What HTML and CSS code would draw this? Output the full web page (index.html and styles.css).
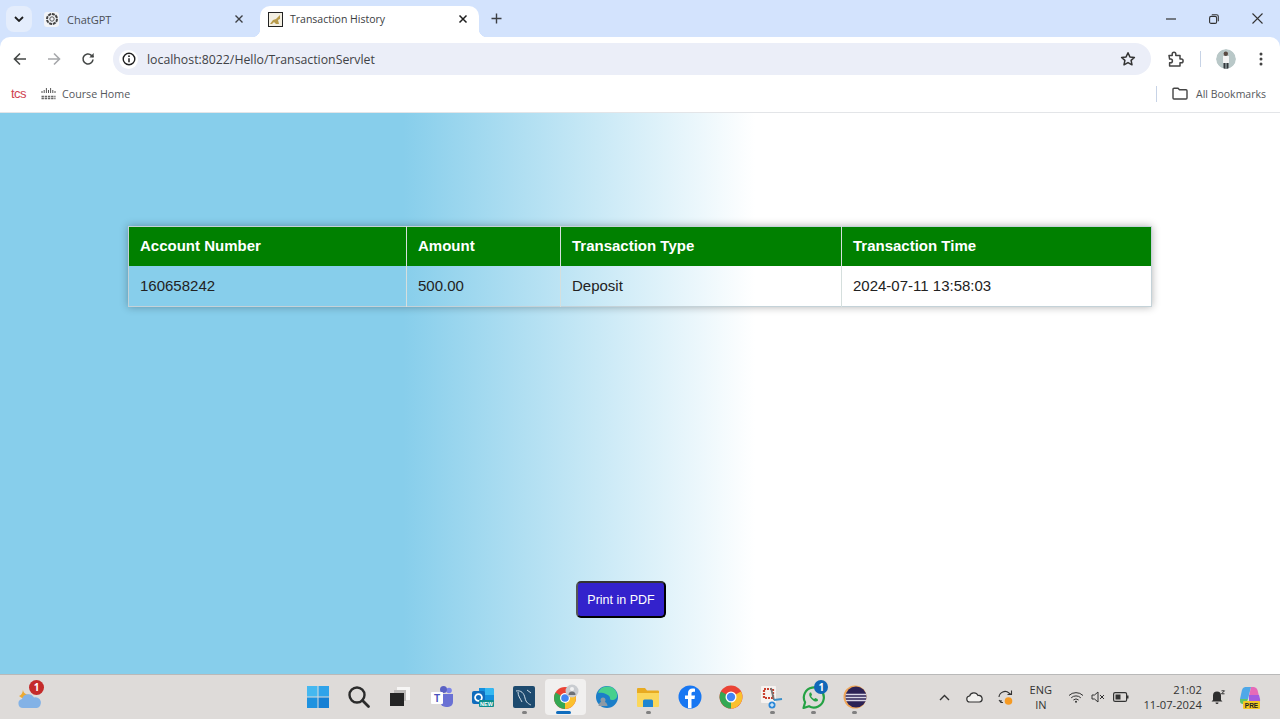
FILE: index.html
```html
<!DOCTYPE html>
<html lang="en">
  <head>
    <meta charset="UTF-8" />
    <title>Transaction History</title>
    <link rel="stylesheet" href="styles.css">
  </head>
  <body>
    <div class="tabstrip">
      <div class="tabsearch">
        <svg width="10" height="6" viewBox="0 0 10 6"><path d="M1 1l4 4 4-4" fill="none" stroke="#1f1f1f" stroke-width="1.800"/></svg>
      </div>
      <div class="tab">
        <span class="favicon white">
          <svg width="14" height="14" viewBox="0 0 14 14"><circle cx="7" cy="7" r="5" fill="none" stroke="#444" stroke-width="2" stroke-dasharray="3 .8"/><circle cx="7" cy="7" r="2.200" fill="none" stroke="#555"/></svg>
        </span>
        <span class="tabtitle">ChatGPT</span>
        <svg class="tabclose" width="10" height="10" viewBox="0 0 10 10"><path d="M1.500 1.500l7 7M8.500 1.500l-7 7" stroke="#3c3f44" stroke-width="1.400"/></svg>
      </div>
      <div class="tab active">
        <span class="favicon">
          <svg width="15" height="15" viewBox="0 0 15 15"><rect x=".5" y=".5" width="14" height="14" fill="#f3efe2" stroke="#222"/><path d="M2 12l3-4 3-1 4-4v4l-2 1 1 4H8L6 10l-2 2z" fill="#b79a4a"/></svg>
        </span>
        <span class="tabtitle">Transaction History</span>
        <svg class="tabclose" width="10" height="10" viewBox="0 0 10 10"><path d="M1.500 1.500l7 7M8.500 1.500l-7 7" stroke="#1f1f1f" stroke-width="1.500"/></svg>
      </div>
      <svg class="newtab" width="11" height="11" viewBox="0 0 11 11"><path d="M5.500 .5v10M.5 5.500h10" stroke="#3c3f44" stroke-width="1.400"/></svg>
      <div class="winbtns">
        <svg width="10" height="10" viewBox="0 0 10 10"><path d="M0 5h10" stroke="#333" stroke-width="1.200"/></svg>
        <svg width="10" height="10" viewBox="0 0 10 10"><rect x=".6" y="2.400" width="7" height="7" rx="1.500" fill="none" stroke="#333" stroke-width="1.100"/><path d="M2.800 .7h4.700a1.800 1.800 0 0 1 1.800 1.800v4.700" fill="none" stroke="#333" stroke-width="1.100"/></svg>
        <svg width="11" height="11" viewBox="0 0 11 11"><path d="M.5 .5l10 10M10.500 .5l-10 10" stroke="#333" stroke-width="1.100"/></svg>
      </div>
    </div>

    <div class="toolbar">
      <div class="navbtns">
        <svg width="14" height="14" viewBox="0 0 14 14"><path d="M13 7H2M7 1.500L1.500 7 7 12.500" fill="none" stroke="#444746" stroke-width="1.600"/></svg>
        <svg width="14" height="14" viewBox="0 0 14 14"><path d="M1 7h11M7 1.500L12.500 7 7 12.500" fill="none" stroke="#a6a8ab" stroke-width="1.600"/></svg>
        <svg width="14" height="14" viewBox="0 0 14 14"><path d="M12 7.500A5 5 0 1 1 10.400 3.300L12.500 5" fill="none" stroke="#444746" stroke-width="1.600"/><path d="M12.700 1v4.400H8.300z" fill="#444746"/></svg>
      </div>
      <div class="omnibox">
        <span class="infochip">
          <svg width="14" height="14" viewBox="0 0 14 14"><circle cx="7" cy="7" r="5.800" fill="none" stroke="#1f1f1f" stroke-width="1.400"/><path d="M7 6.200v4" stroke="#1f1f1f" stroke-width="1.500"/><circle cx="7" cy="4.200" r=".9" fill="#1f1f1f"/></svg>
        </span>
        <span class="url">localhost:8022/Hello/TransactionServlet</span>
        <svg class="star" width="16" height="16" viewBox="0 0 16 16"><path d="M8 1.800l1.900 4.100 4.500.5-3.300 3 .9 4.400L8 11.600l-4 2.200.9-4.400-3.300-3 4.500-.5z" fill="none" stroke="#333" stroke-width="1.500" stroke-linejoin="round"/></svg>
      </div>
      <div class="toolicons">
        <svg width="17" height="17" viewBox="0 0 17 17"><path d="M2 4.500h3.200V3a1.800 1.800 0 0 1 3.600 0v1.500H13v3.600h1.300a1.800 1.800 0 0 1 0 3.600H13V15H2.600v-3.300h1a1.800 1.800 0 0 0 0-3.600h-1z" fill="none" stroke="#444" stroke-width="1.500" stroke-linejoin="round"/></svg>
        <span class="tooldivider"></span>
        <span class="avatar">
          <svg width="20" height="20" viewBox="0 0 20 20"><circle cx="10" cy="10" r="10" fill="#b9c8c8"/><rect x="7" y="7" width="6" height="7" fill="#f4f4f4"/><circle cx="9.800" cy="4.800" r="2.200" fill="#5a4a42"/><path d="M7.500 14h2v6h-2zM10.500 14h2v6h-2z" fill="#33383d"/></svg>
        </span>
        <svg width="4" height="14" viewBox="0 0 4 14"><circle cx="2" cy="2" r="1.500" fill="#444"/><circle cx="2" cy="7" r="1.500" fill="#444"/><circle cx="2" cy="12" r="1.500" fill="#444"/></svg>
      </div>
    </div>

    <div class="bookmarks">
      <span class="tcs">tcs</span>
      <svg class="cisco" width="15" height="12" viewBox="0 0 15 12"><path d="M1 3v2M3.200 2v3M5.400 0v5M7.500 2v3M9.600 0v5M11.800 2v3M14 3v2" stroke="#555" stroke-width="1"/><path d="M.5 8.500h14M.5 10.500h14" stroke="#666" stroke-width="1.500" stroke-dasharray="2.400 .8"/></svg>
      <span class="bookmark course">Course Home</span>
      <span class="bmdivider"></span>
      <svg class="folder" width="16" height="13" viewBox="0 0 16 13"><path d="M1 2.200a1 1 0 0 1 1-1h4l1.500 1.600H14a1 1 0 0 1 1 1V11a1 1 0 0 1-1 1H2a1 1 0 0 1-1-1z" fill="none" stroke="#444" stroke-width="1.400"/></svg>
      <span class="bookmark all">All Bookmarks</span>
    </div>

    <div class="page">
      <table class="history">
        <tr>
          <th class="col-account">Account Number</th>
          <th class="col-amount">Amount</th>
          <th class="col-type">Transaction Type</th>
          <th>Transaction Time</th>
        </tr>
        <tr>
          <td>160658242</td>
          <td>500.00</td>
          <td>Deposit</td>
          <td>2024-07-11 13:58:03</td>
        </tr>
      </table>
      <button class="printbtn">Print in PDF</button>
    </div>

    <div class="taskbar">
      <div class="weather">
        <svg width="26" height="24" viewBox="0 0 26 24"><path d="M6 3c-.5 4 2 7 7 7l-2 4-6-1-3-2c3-1 4-4 4-8z" fill="#eda92f"/><path d="M6 23a4.500 4.500 0 0 1-1-8.900A6.500 6.500 0 0 1 17 12.500 5.300 5.300 0 0 1 20 23z" fill="#83b2e6"/></svg>
        <span class="weatherbadge">1</span>
      </div>

      <div class="apps">
        <span class="app">
          <svg width="24" height="24" viewBox="0 0 24 24"><path d="M1 1h10.500v10.500H1z" fill="#45b8f0"/><path d="M12.500 1H23v10.500H12.500z" fill="#2fa3ea"/><path d="M1 12.500h10.500V23H1z" fill="#1e92e0"/><path d="M12.500 12.500H23V23H12.500z" fill="#157fd4"/></svg>
        </span>
        <span class="app">
          <svg width="24" height="24" viewBox="0 0 24 24"><circle cx="10" cy="10" r="7.500" fill="none" stroke="#2b2b2b" stroke-width="2.400"/><path d="M15.500 15.500l6 6" stroke="#2b2b2b" stroke-width="2.800" stroke-linecap="round"/></svg>
        </span>
        <span class="app">
          <svg width="24" height="24" viewBox="0 0 24 24"><rect x="9" y="2" width="13" height="13" fill="#f7f6f5"/><rect x="6" y="5" width="12" height="11" fill="#bdbbb9"/><rect x="2" y="8" width="14" height="13" fill="#242424"/></svg>
        </span>
        <span class="app">
          <svg width="24" height="24" viewBox="0 0 24 24"><circle cx="19" cy="5.500" r="2.800" fill="#7b83eb"/><circle cx="13.500" cy="4.500" r="3.500" fill="#5b62c4"/><path d="M10 9h13v8a5 5 0 0 1-5 5h-2a6 6 0 0 1-6-6z" fill="#6a71d4"/><rect x="1" y="7" width="12" height="12" rx="1" fill="#fff"/><text class="teamst" x="7" y="16.500" text-anchor="middle">T</text></svg>
        </span>
        <span class="app">
          <svg width="24" height="24" viewBox="0 0 24 24"><path d="M8 3h13a2 2 0 0 1 2 2v11H8z" fill="#1490df"/><path d="M14 3h7a2 2 0 0 1 2 2v5h-9z" fill="#35b8f1"/><rect x="1" y="6" width="13" height="13" rx="2" fill="#0f6cbd"/><circle cx="7.500" cy="12.500" r="3.400" fill="none" stroke="#fff" stroke-width="1.800"/><rect x="8" y="15" width="15" height="7" rx="1" fill="#0c8f8f"/><text class="newtag" x="15.500" y="21">NEW</text></svg>
        </span>
        <span class="app running">
          <svg width="24" height="24" viewBox="0 0 24 24"><rect x="1" y="1" width="22" height="22" rx="2" fill="#1d4a6e"/><path d="M4 6c5-1 8 2 9 7s4 6 6 7M6 7c0 4 2 6 4 10M15 5l4 3" fill="none" stroke="#cfdde8" stroke-width="1"/></svg>
        </span>
        <span class="app current">
          <svg width="26" height="26" viewBox="0 0 26 26"><circle cx="12" cy="14" r="11" fill="#ea4335"/><path d="M12 14L2.500 8.500A11 11 0 0 0 12 25z" fill="#34a853"/><path d="M12 14v11a11 11 0 0 0 9.500-16.500z" fill="#fbc02d"/><circle cx="12" cy="14" r="5" fill="#fff"/><circle cx="12" cy="14" r="3.800" fill="#4285f4"/><circle cx="19" cy="7" r="6.500" fill="#c9ccd0"/><circle cx="19" cy="5" r="2" fill="#f2f2f2"/><path d="M15.500 11a3.500 3.500 0 0 1 7 0z" fill="#6c7075"/></svg>
          <span class="activebar"></span>
        </span>
        <span class="app">
          <svg width="24" height="24" viewBox="0 0 24 24"><circle cx="12" cy="12" r="11" fill="#1b7ec8"/><path d="M3 8a10 10 0 0 1 19 1c1 4-2 6-5 6-2 0-2-1-2-2 0-4-9-6-12-5z" fill="#46d08e"/><circle cx="8" cy="15" r="2.500" fill="#8d9aa5"/><path d="M3.500 21a4.500 4.500 0 0 1 9 0z" fill="#8d9aa5"/></svg>
        </span>
        <span class="app running">
          <svg width="24" height="24" viewBox="0 0 24 24"><path d="M1 4a1 1 0 0 1 1-1h7l2 2.500h11a1 1 0 0 1 1 1V9H1z" fill="#e8ab21"/><path d="M1 8h22v13a1 1 0 0 1-1 1H2a1 1 0 0 1-1-1z" fill="#fbd75b"/><path d="M7 16a1.500 1.500 0 0 1 1.500-1.500h7A1.500 1.500 0 0 1 17 16v6H7z" fill="#1f86d1"/></svg>
        </span>
        <span class="app">
          <svg width="24" height="24" viewBox="0 0 24 24"><circle cx="12" cy="12" r="11.500" fill="#1877f2"/><path d="M13.500 23v-9h3l.5-3.500h-3.500V8.500c0-1 .5-1.800 1.900-1.800H17v-3c-.6-.1-1.500-.2-2.500-.2-2.700 0-4.500 1.600-4.500 4.600v2.400H7V14h3v9z" fill="#fff"/></svg>
        </span>
        <span class="app">
          <svg width="24" height="24" viewBox="0 0 24 24"><circle cx="12" cy="12" r="11.500" fill="#ea4335"/><path d="M12 12L2 6.500A11.500 11.500 0 0 0 12 23.500z" fill="#34a853"/><path d="M12 12v11.500A11.500 11.500 0 0 0 22 6.500z" fill="#fbc02d"/><circle cx="12" cy="12" r="5.500" fill="#fff"/><circle cx="12" cy="12" r="4.200" fill="#4285f4"/></svg>
        </span>
        <span class="app running">
          <svg width="24" height="24" viewBox="0 0 24 24"><rect x="1" y="1" width="15" height="17" rx="1" fill="#f6f2f0"/><rect x="4" y="4" width="9" height="9" fill="none" stroke="#c9402f" stroke-width="2.200" stroke-dasharray="2 1"/><path d="M11 3l3 12" stroke="#777" stroke-width="1.800"/><path d="M14 15l8-1" stroke="#3a8fc9" stroke-width="2"/><circle cx="12" cy="20" r="3.500" fill="#2b88d8"/><path d="M12 18v4M10 20h4" stroke="#fff"/></svg>
        </span>
        <span class="app running">
          <svg width="24" height="24" viewBox="0 0 24 24"><path d="M1.500 23l1.600-5.700A10 10 0 1 1 7 21.200z" fill="none" stroke="#25a244" stroke-width="2.200" stroke-linejoin="round"/><path d="M8 7.500c-1.500 1.500-.8 4 1.500 6.500s5 3.300 6.500 1.800l-.4-1.800-2.400-1-1 1c-1.300-.5-2.600-1.800-3.100-3.100l1-1-1-2.400z" fill="#25a244"/></svg>
          <span class="appbadge">1</span>
        </span>
        <span class="app running">
          <svg width="24" height="24" viewBox="0 0 24 24"><circle cx="12" cy="12" r="11.500" fill="#f0a658"/><circle cx="13" cy="12" r="10.500" fill="#2c2255"/><path d="M2.800 9.500h20.400M2.500 12.500h21M3 15.500h20" stroke="#d9d6e6" stroke-width="1.400"/></svg>
        </span>
      </div>

      <div class="tray">
        <svg class="chevron" width="11" height="7" viewBox="0 0 11 7"><path d="M1 6l4.500-4.500L10 6" fill="none" stroke="#333" stroke-width="1.400"/></svg>
        <svg class="onedrive" width="17" height="11" viewBox="0 0 17 11"><path d="M4 10a3 3 0 0 1-.4-6A4.500 4.500 0 0 1 12 3.500 3.300 3.300 0 0 1 13.500 10z" fill="#f2f1ef" stroke="#333" stroke-width="1.200"/></svg>
        <svg class="sync" width="17" height="17" viewBox="0 0 17 17"><path d="M2 8a6 6 0 0 1 10-4l2 1.500M14.500 1.500v4h-4M2 11l2 2.500h2M4 11v3" fill="none" stroke="#333" stroke-width="1.100"/><circle cx="11.500" cy="12" r="3.800" fill="#f59a23"/></svg>
        <span class="lang">ENG<br>IN</span>
        <svg class="wifi" width="16" height="12" viewBox="0 0 16 12"><path d="M1 4.500a10 10 0 0 1 14 0M3.200 6.800a7 7 0 0 1 9.600 0M5.400 9a4 4 0 0 1 5.200 0" fill="none" stroke="#333" stroke-width="1"/><circle cx="8" cy="10.800" r="1" fill="#333"/></svg>
        <svg class="sound" width="14" height="12" viewBox="0 0 14 12"><path d="M1 4h2.500L7 1v10L3.500 8H1z" fill="none" stroke="#333"/><path d="M9 4l4 4M13 4l-4 4" stroke="#333"/></svg>
        <svg class="battery" width="16" height="10" viewBox="0 0 16 10"><rect x=".6" y=".6" width="13" height="8.800" rx="1.500" fill="none" stroke="#333" stroke-width="1.200"/><rect x="2.500" y="2.500" width="5" height="5" fill="#333"/><rect x="14" y="3.500" width="1.500" height="3" fill="#333"/></svg>
        <span class="clock"><span>21:02</span><span>11-07-2024</span></span>
        <svg class="bell" width="15" height="15" viewBox="0 0 15 15"><path d="M6 1.500a4 4 0 0 1 4 4V10l1.500 1.500h-11L2 10V5.500a4 4 0 0 1 4-4z" fill="#2e2e2e"/><path d="M4.500 12.500h3a1.500 1.500 0 0 1-3 0z" fill="#2e2e2e"/><path d="M10.500 .8h3l-3 3h3" fill="none" stroke="#2e2e2e"/></svg>
        <span class="copilot">
          <svg width="24" height="25" viewBox="0 0 24 25"><path d="M7 2h6l-3 12H2l2-9a4 4 0 0 1 3-3z" fill="#4fa8e8"/><path d="M13 2h3a4 4 0 0 1 3.500 3l1.500 6H11z" fill="#e66ab8"/><path d="M2 14h8l-2 5H5a3 3 0 0 1-3-3z" fill="#5fc46a"/><path d="M11 10h10l1 4a3 3 0 0 1-3 4h-8z" fill="#a25ce0"/><rect x="5" y="16" width="17" height="8" rx="1" fill="#f3c723"/><text class="pre" x="13.500" y="22.500">PRE</text></svg>
        </span>
      </div>
    </div>
  </body>
</html>
```

FILE: styles.css
```css
*{
    margin: 0;
    padding: 0;
    box-sizing: border-box;
}
html, body{
    height: 100%;
    overflow: hidden;
}
body{
    display: flex;
    flex-direction: column;
    background: #d3e3fd;
    font-family: "Open Sans", "Liberation Sans", sans-serif;
    color: #1f1f1f;
}
svg{
    display: block;
    flex-shrink: 0;
}

/* browser tabs */
.tabstrip{
    display: flex;
    align-items: flex-end;
    height: 37px;
    padding-left: 6px;
}
.tabsearch{
    display: flex;
    align-items: center;
    justify-content: center;
    width: 26px;
    height: 26px;
    margin-bottom: 5px;
    border-radius: 8px;
    background: #e4edfc;
}
.tab{
    display: flex;
    align-items: center;
    width: 228px;
    height: 31px;
    padding: 0 16px 5px 12px;
    font-size: 11px;
    color: #4b4f55;
}
.tab.active{
    position: relative;
    width: 219px;
    padding: 0 11px 5px 8px;
    border-radius: 10px 10px 0 0;
    background: #fff;
    font-size: 10.500px;
    color: #3a3d41;
}
.tab.active::before, .tab.active::after{
    content: "";
    position: absolute;
    bottom: 0;
    width: 8px;
    height: 8px;
}
.tab.active::before{
    left: -8px;
    background: radial-gradient(circle at 0 0, transparent 8px, #fff 8.500px);
}
.tab.active::after{
    right: -8px;
    background: radial-gradient(circle at 100% 0, transparent 8px, #fff 8.500px);
}
.favicon{
    display: flex;
    align-items: center;
    justify-content: center;
    width: 15px;
    height: 15px;
    margin-right: 7px;
}
.favicon.white{
    margin-right: 8px;
    border-radius: 3px;
    background: #f2f4f8;
}
.tabtitle{
    flex: 1;
}
.newtab{
    margin: 0 0 13px 12px;
}
.winbtns{
    display: flex;
    align-items: center;
    gap: 33px;
    margin: 0 17px 13px auto;
}

/* address bar */
.toolbar{
    display: flex;
    align-items: center;
    height: 38px;
    padding-left: 13px;
    border-radius: 10px 10px 0 0;
    background: #fff;
}
.navbtns{
    display: flex;
    gap: 20px;
    width: 100px;
    margin-top: 6px;
}
.omnibox{
    display: flex;
    align-items: center;
    width: 1038px;
    height: 32px;
    margin-top: 6px;
    padding: 0 15px 0 6px;
    border-radius: 16px;
    background: #ebeef8;
}
.infochip{
    display: flex;
    align-items: center;
    justify-content: center;
    width: 19px;
    height: 19px;
    margin-right: 9px;
    border-radius: 50%;
    background: #fff;
}
.url{
    flex: 1;
    font-size: 12.300px;
    color: #3f4246;
}
.toolicons{
    display: flex;
    align-items: center;
    margin-left: 16px;
    margin-top: 6px;
}
.tooldivider{
    width: 1px;
    height: 16px;
    margin: 0 15px 0 16px;
    background: #c7d3e6;
}
.avatar{
    margin-right: 23px;
    border-radius: 50%;
    overflow: hidden;
}

/* bookmarks */
.bookmarks{
    display: flex;
    align-items: center;
    height: 38px;
    padding: 0 14px 0 11px;
    border-bottom: 1px solid #e3e5e8;
    background: #fff;
    color: #55585c;
}
.course{
    font-size: 10.700px;
}
.all{
    font-size: 10.500px;
}
.tcs{
    width: 30px;
    font-family: "Liberation Sans", sans-serif;
    font-size: 13px;
    color: #d0414f;
    letter-spacing: -.5px;
}
.cisco{
    margin-right: 6px;
}
.bmdivider{
    width: 1px;
    height: 16px;
    margin-left: auto;
    margin-right: 15px;
    background: #c7d3e6;
}
.folder{
    margin-right: 8px;
}

/* the page itself */
.page{
    flex: 1;
    display: flex;
    flex-direction: column;
    align-items: center;
    padding-top: 113px;
    background: linear-gradient(to right, #87ceeb 31.500%, #fff 59%);
    font-family: "Liberation Sans", Arial, sans-serif;
}
.history{
    width: 1024px;
    border: 1px solid #c4d2d8;
    border-collapse: collapse;
    table-layout: fixed;
    box-shadow: 0 0 8px rgba(0, 0, 0, .3);
    font-size: 15px;
    text-align: left;
}
.col-account{
    width: 278px;
}
.col-amount{
    width: 154px;
}
.col-type{
    width: 281px;
}
th, td{
    padding: 0 11px;
    border-left: 1px solid #d5dfdd;
}
th:first-child, td:first-child{
    border-left: 0;
}
th{
    height: 39px;
    padding-bottom: 2px;
    background: #008000;
    color: #fff;
}
td{
    height: 41px;
    color: #222;
}
.printbtn{
    width: 90px;
    height: 37px;
    margin-top: 274px;
    margin-right: 38px;
    border: 2px solid #000;
    border-top-color: #333;
    border-left-color: #555;
    border-radius: 5px;
    background: #3322cc;
    color: #fff;
    font-family: "Liberation Sans", Arial, sans-serif;
    font-size: 12.500px;
}

/* windows taskbar */
.taskbar{
    position: relative;
    display: flex;
    align-items: center;
    height: 45px;
    border-top: 1px solid #b9b9b9;
    background: #dedbd9;
    font-size: 11px;
    color: #333;
}
.weather{
    position: relative;
    margin-left: 17px;
}
.weatherbadge{
    position: absolute;
    top: -5px;
    right: -1px;
    width: 15px;
    height: 15px;
    border-radius: 50%;
    background: #c42b2b;
    color: #fff;
    font-size: 10px;
    font-weight: 700;
    line-height: 15px;
    text-align: center;
}
.apps{
    display: flex;
    margin-left: 254px;
}
.app{
    position: relative;
    display: flex;
    align-items: center;
    justify-content: center;
    width: 41.350px;
    height: 36px;
}
.app.running::after{
    content: "";
    position: absolute;
    bottom: 1px;
    left: 18px;
    width: 5px;
    height: 3px;
    border-radius: 2px;
    background: #808080;
}
.app.current{
    border-radius: 4px;
    background: #f1f0ef;
}
.activebar{
    position: absolute;
    bottom: 1px;
    left: 11px;
    width: 15px;
    height: 3px;
    border-radius: 2px;
    background: #0f6cbd;
}
.appbadge{
    position: absolute;
    top: 1px;
    right: 6px;
    width: 14px;
    height: 14px;
    border-radius: 50%;
    background: #1167b8;
    color: #fff;
    font-size: 10px;
    font-weight: 700;
    line-height: 14px;
    text-align: center;
}
.teamst{
    font-family: "Liberation Sans", sans-serif;
    font-size: 10px;
    font-weight: 700;
    fill: #4b53bc;
}
.newtag{
    font-family: "Liberation Sans", sans-serif;
    font-size: 5.500px;
    font-weight: 700;
    fill: #fff;
    text-anchor: middle;
}
.pre{
    font-family: "Liberation Sans", sans-serif;
    font-size: 6.500px;
    font-weight: 700;
    fill: #222;
    text-anchor: middle;
}
.tray{
    display: flex;
    align-items: center;
    margin-left: 63px;
}
.chevron{
    margin-right: 16px;
}
.onedrive{
    margin-right: 14px;
}
.sync{
    margin-right: 12px;
}
.lang{
    width: 30px;
    margin-right: 12px;
    line-height: 15px;
    text-align: center;
}
.wifi{
    margin-right: 7px;
}
.sound{
    margin-right: 8px;
}
.clock{
    display: flex;
    flex-direction: column;
    align-items: flex-end;
    width: 73px;
    font-size: 11.200px;
    line-height: 15px;
}
.bell{
    margin-left: 9px;
}
.copilot{
    margin-left: 12px;
}
```
